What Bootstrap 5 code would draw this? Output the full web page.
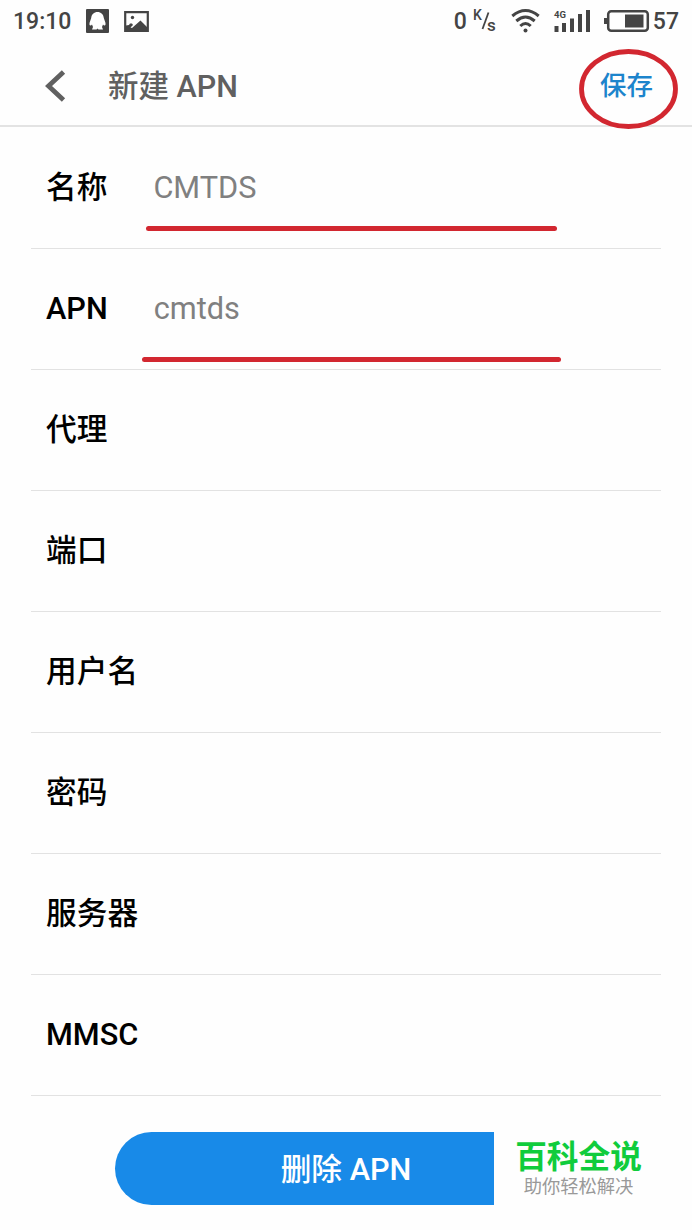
<!DOCTYPE html>
<html lang="zh-CN">
<head>
<meta charset="utf-8">
<meta name="viewport" content="width=device-width, initial-scale=1">
<title>新建 APN</title>
<link href="https://cdn.jsdelivr.net/npm/bootstrap@5.3.0/dist/css/bootstrap.min.css" rel="stylesheet">
<style>
body{font-family:Roboto,"Noto Sans CJK SC",sans-serif;background:#fefefe;color:#000;overflow:hidden}
.screen{width:692px;height:1230px}
.status{height:42px;padding:0 13px 0 13px;color:#444;font-size:23px;font-weight:500;line-height:42px}
.status span{padding-top:1px}
.status svg{display:block;flex:none;overflow:visible}
.qq{margin-left:15px}
.picture{margin-left:15px}
.speed{margin-left:6px}
.wifi,.signal{margin-left:14px}
.battery{margin-left:13px}
.level{margin-left:4px}
.appbar{height:85px;border-bottom:2px solid #e3e3e3;padding:4px 39px 0 45px;font-size:30.5px;color:#606060;font-weight:500}
.bar-title{margin-left:41px;padding-top:2px}
.appbar .save{font-size:26.5px;color:#1c84cc;line-height:1;top:1px}
.ring{left:-22px;top:-25px}
.fields{padding:1px 31px 0}
.fields .field{height:121px;border-bottom:1px solid #e2e2e2;padding:1px 15px 0;font-size:30.7px}
.field-label{font-weight:500;white-space:nowrap}
.field-value{color:#808080;margin-left:46px}
.marker{height:5px;border-radius:3px;background:#d22730}
.marker.first{left:115px;top:98px;width:411px}
.marker.second{left:111px;top:108px;width:419px}
.actions{padding:36px 115px 0}
.remove,.remove:hover{height:73px;background:#188ae8;color:#fff;font-size:30.7px;font-weight:500;border-radius:37px;padding:4px 0 0}
.watermark{left:494px;top:1131px;width:173px;height:75px;background:#fefefe;padding-right:4px}
.wm-title{font-size:31.7px;font-weight:700;color:#10cc3c;line-height:32px;margin-top:11px;white-space:nowrap}
.wm-sub{font-size:18.3px;color:#999;line-height:20px;margin-top:3px;white-space:nowrap}
</style>
</head>
<body>
<main class="screen position-relative">
  <header>
    <div class="status d-flex align-items-center">
      <span class="clock">19:10</span>
      <svg class="qq" width="23" height="24" viewBox="0 0 23 24"><rect width="23" height="24" rx="1" fill="#444"/><path d="M11.500 3C8 3 5.500 5.500 5.200 9L3.500 14Q3 17 5 16.500L6 15.500L7 18L6 20.500H10.500L11.500 19.500L12.500 20.500H17L16 18L17 15.500L18 16.500Q20 17 19.500 14L17.800 9C17.500 5.500 15 3 11.500 3Z" fill="#fff"/></svg>
      <svg class="picture" width="25" height="21" viewBox="0 0 25 21"><path d="M1.200 1.200H23.800V19.800H1.200Z" fill="none" stroke="#444" stroke-width="2.200"/><circle cx="8.500" cy="6.500" r="1.700" fill="#444"/><path d="M2 14.500L5 14L6 12.500L8 12.500L9 14L6.500 16.500L8 17L16.500 9.500L24 17V20H2Z" fill="#444"/></svg>
      <span class="ms-auto rate">0</span>
      <svg class="speed" width="24" height="24" viewBox="0 0 24 24" fill="#444" font-family="Roboto" font-weight="500"><text x="0" y="11" font-size="14">K</text><text x="14" y="22" font-size="17">s</text><path d="M15.500 3.500L9.500 20" stroke="#444" stroke-width="1.800"/></svg>
      <svg class="wifi" width="29" height="26" viewBox="0 0 29 26" fill="none" stroke="#444" stroke-width="3"><path d="M1.300 8Q14.500-3 27.700 8M5.300 13Q14.500 5 23.700 13M9.300 18Q14.500 13 19.700 18"/><circle cx="14.500" cy="22.500" r="2" fill="#444" stroke="none"/></svg>
      <svg class="signal" width="37" height="24" viewBox="0 0 37 24" fill="#444"><text x="0" y="9" font-size="9.500" font-weight="700" font-family="Roboto">4G</text><path d="M.5 17h4v6h-4zM8 14h4v9H8zM16 9.500h4V23h-4zM24 5h4v18h-4zM32 1h4v22h-4z"/></svg>
      <svg class="battery" width="45" height="24" viewBox="0 0 45 24"><rect x="4.200" y="2.200" width="39.600" height="19.600" rx="3" fill="none" stroke="#444" stroke-width="2.500"/><path d="M0 9h3v6H0zM21 5.500h18.500v13H21z" fill="#444"/></svg>
      <span class="level">57</span>
    </div>
    <nav class="appbar d-flex align-items-center">
      <svg width="22" height="34" viewBox="0 0 22 34"><path d="M18.500 3L3.500 17L18.500 31" fill="none" stroke="#606060" stroke-width="4.800"/></svg>
      <span class="bar-title">新建 APN</span>
      <div class="save ms-auto position-relative">保存
        <svg class="ring position-absolute" width="100" height="82" viewBox="0 0 100 82"><ellipse cx="50.500" cy="41" rx="47" ry="37.500" fill="none" stroke="#d22730" stroke-width="4.800"/></svg>
      </div>
    </nav>
  </header>
  <section class="fields">
    <div class="field d-flex align-items-center position-relative"><span class="field-label">名称</span><span class="field-value">CMTDS</span><i class="marker first position-absolute"></i></div>
    <div class="field d-flex align-items-center position-relative"><span class="field-label">APN</span><span class="field-value">cmtds</span><i class="marker second position-absolute"></i></div>
    <div class="field d-flex align-items-center"><span class="field-label">代理</span></div>
    <div class="field d-flex align-items-center"><span class="field-label">端口</span></div>
    <div class="field d-flex align-items-center"><span class="field-label">用户名</span></div>
    <div class="field d-flex align-items-center"><span class="field-label">密码</span></div>
    <div class="field d-flex align-items-center"><span class="field-label">服务器</span></div>
    <div class="field d-flex align-items-center"><span class="field-label">MMSC</span></div>
  </section>
  <div class="actions"><button class="remove btn w-100 border-0">删除 APN</button></div>
  <aside class="watermark position-absolute text-center"><div class="wm-title">百科全说</div><div class="wm-sub">助你轻松解决</div></aside>
</main>
<script src="https://cdn.jsdelivr.net/npm/bootstrap@5.3.0/dist/js/bootstrap.bundle.min.js"></script>
</body>
</html>
